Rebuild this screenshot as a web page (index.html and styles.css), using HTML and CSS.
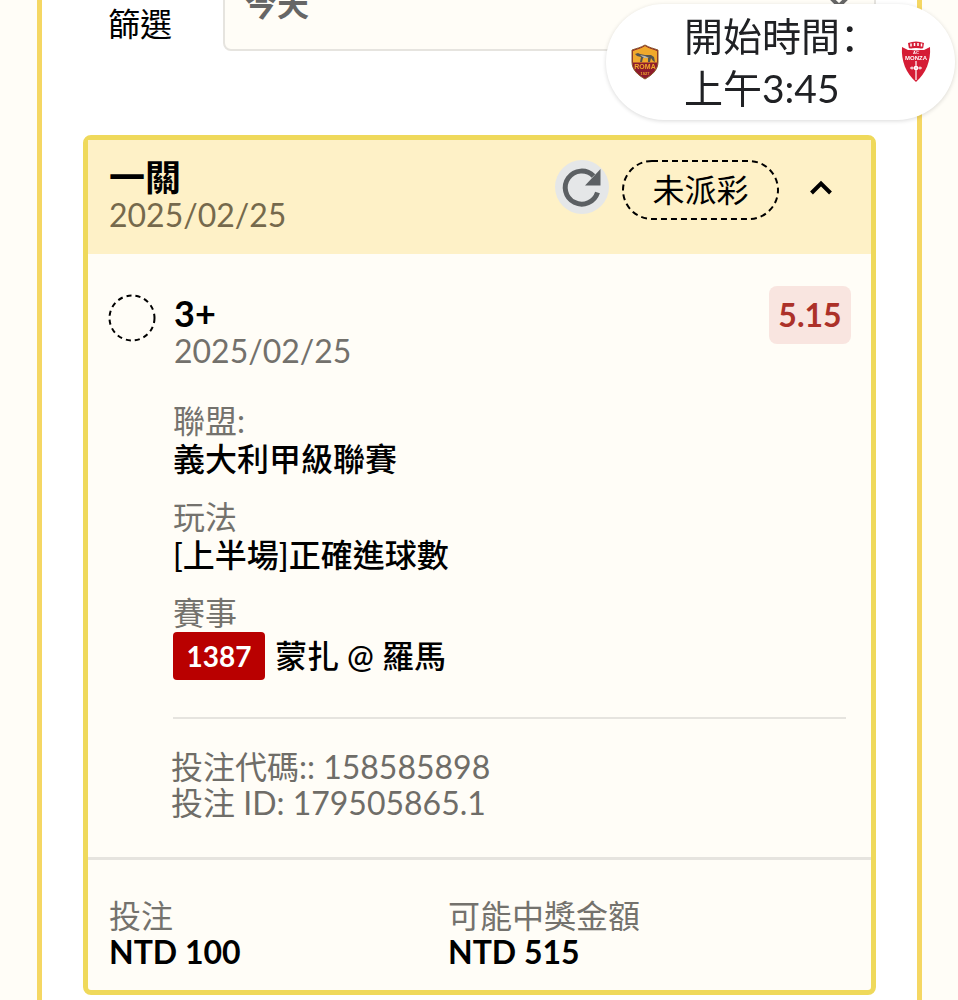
FILE: index.html
```html
<!DOCTYPE html>
<html lang="zh-Hant">
<head>
    <meta charset="UTF-8">
    <meta name="viewport" content="width=device-width, initial-scale=1.0">
    <title>投注紀錄</title>
    <link rel="stylesheet" href="styles.css">
</head>
<body>

    <main class="panel">
        <div class="filter">
            <label class="filter-label" for="day">篩選</label>
            <div class="select-box">
                <select id="day" class="filter-select">
                    <option>今天</option>
                </select>
                <svg class="select-arrow" viewBox="0 0 26 16" aria-hidden="true">
                    <path d="M3 3l10 10L23 3" fill="none" stroke="#666" stroke-width="4"/>
                </svg>
            </div>
        </div>

        <section class="card">
            <header class="card-header">
                <div class="card-title">
                    <h2 class="title">一關</h2>
                    <p class="header-date">2025/02/25</p>
                </div>
                <button class="refresh-btn" type="button" aria-label="重新整理">
                    <svg viewBox="0 0 54 54" aria-hidden="true">
                        <path d="M42.500 32.500A16.500 16.500 0 1 1 38.500 16" fill="none" stroke="#5c6063" stroke-width="5"/>
                        <path d="M45.500 9v16.500H30z" fill="#5c6063"/>
                    </svg>
                </button>
                <span class="status">
                    <svg class="status-line" aria-hidden="true">
                        <rect class="status-shape" x="1" y="1" rx="29"/>
                    </svg>
                    未派彩
                </span>
                <button class="toggle-btn" type="button" aria-label="收合">
                    <svg viewBox="0 0 24 16" aria-hidden="true">
                        <path d="M2.500 13L12 3.500 21.500 13" fill="none" stroke="#000" stroke-width="4"/>
                    </svg>
                </button>
            </header>

            <div class="card-body">
                <div class="bet">
                    <svg class="circle" viewBox="0 0 48 48" aria-hidden="true">
                        <circle cx="24" cy="24" r="22.500" fill="none" stroke="#000" stroke-width="2" stroke-dasharray="5.070 4"/>
                    </svg>
                    <div class="bet-name">
                        <h3 class="pick">3+</h3>
                        <p class="date">2025/02/25</p>
                    </div>
                    <span class="odds">5.15</span>
                </div>

                <dl class="info">
                    <div class="info-item">
                        <dt>聯盟:</dt>
                        <dd>義大利甲級聯賽</dd>
                    </div>
                    <div class="info-item">
                        <dt>玩法</dt>
                        <dd>[上半場]正確進球數</dd>
                    </div>
                    <div class="info-item">
                        <dt>賽事</dt>
                        <dd class="match"><span class="match-no">1387</span><span>蒙扎 @ 羅馬</span></dd>
                    </div>
                </dl>

                <div class="codes">
                    <p>投注代碼:: 158585898</p>
                    <p>投注 ID: 179505865.1</p>
                </div>
            </div>

            <dl class="card-footer">
                <div class="total">
                    <dt>投注</dt>
                    <dd>NTD 100</dd>
                </div>
                <div class="total">
                    <dt>可能中獎金額</dt>
                    <dd>NTD 515</dd>
                </div>
            </dl>
        </section>
    </main>

    <aside class="bubble">
        <svg class="team-logo" viewBox="0 0 28 36" role="img" aria-label="Roma">
            <path d="M14 1C10 3.500 5 4.500 1 6v12c0 8 6 13 13 17 7-4 13-9 13-17V6C23 4.500 18 3.500 14 1z" fill="#8e1b2c"/>
            <path d="M14 2C10 4.500 5 5.500 2 7v11.500h24V7C23 5.500 18 4.500 14 2z" fill="#f0a92c"/>
            <path d="M4 10l3-1 2 1 5 1h6l3 2 1 5-2-1-2-3-1 4h-2v-4h-5l-1 4h-2l1-5-4-1z" fill="#55534f"/>
            <path d="M9 11l5 1 4 2-5 0z" fill="#b9b6ae"/>
            <text x="14" y="25" class="logo-text roma-text">ROMA</text>
            <text x="14" y="31" class="logo-text roma-year">1927</text>
            <path d="M14 1C10 3.500 5 4.500 1 6v12c0 8 6 13 13 17 7-4 13-9 13-17V6C23 4.500 18 3.500 14 1z" fill="none" stroke="#8b5a2b" stroke-width="1"/>
        </svg>
        <p class="bubble-text" lang="zh-Hans">開始時間：<br>上午3:45</p>
        <svg class="team-logo monza" viewBox="0 0 30 42" role="img" aria-label="Monza">
            <path d="M1 6l6 3h16l6-3c1 14-4 26-14 35C5 32 0 20 1 6z" fill="#d51c35"/>
            <path d="M7 2q8-3 16 0l-1 6q-7-2-14 0z" fill="#d51c35"/>
            <path d="M10 2.500v3M13.500 2v3M17 2v3M20.500 2.500v3" stroke="#fff" stroke-width="1.500"/>
            <path d="M6 7q9 4 18 0" fill="none" stroke="#fff" stroke-width="1"/>
            <text x="15" y="13" class="logo-text monza-ac">AC</text>
            <text x="15" y="19" class="logo-text monza-text">MONZA</text>
            <path d="M15 20v19M9 27h12" fill="none" stroke="#fff" stroke-width="1.200"/>
            <path d="M11 25.500v3M19 25.500v3M13.500 25.500h3v3h-3z" fill="none" stroke="#fff" stroke-width="1"/>
        </svg>
    </aside>

</body>
</html>
```
FILE: styles.css
```css
* {
    box-sizing: border-box;
}
body {
    margin: 0;
    background-color: #fffdf7;
    font-family: Lato, "Noto Sans CJK TC", sans-serif;
    font-size: 32px;
    line-height: 38px;
    color: #000;
}
h2, h3, p, dl, dd {
    margin: 0;
}
button {
    padding: 0;
    border: none;
    background: none;
    cursor: pointer;
}
svg {
    display: block;
}

.panel {
    display: flow-root;
    min-height: 100vh;
    margin: 0 36px 0 37px;
    padding: 0 41px;
    border-left: 5px solid #f5d763;
    border-right: 5px solid #f5d763;
    background-color: #fff;
}

/* フィルター */
.filter {
    display: flex;
    align-items: flex-end;
    margin: -45px 0 84px;
    padding-left: 25px;
}
.filter-label {
    width: 115px;
    margin-bottom: 8px;
}
.select-box {
    position: relative;
    flex: 1;
}
.filter-select {
    display: block;
    width: 100%;
    height: 96px;
    padding: 0 20px;
    border: 2px solid #e6e4df;
    border-radius: 8px;
    background-color: #fffdf7;
    color: #666;
    font: bold 32px Lato, "Noto Sans CJK TC", sans-serif;
    appearance: none;
}
.select-arrow {
    position: absolute;
    right: 24px;
    top: 38px;
    width: 26px;
    height: 16px;
}

/* カード */
.card {
    border: 5px solid #efd95b;
    border-radius: 8px;
    background-color: #fffdf7;
}
.card-header {
    display: flex;
    align-items: flex-start;
    padding: 18px 38px 20px 21px;
    background-color: #fef1c7;
}
.card-title {
    flex: 1;
}
.title {
    font-size: 36px;
    font-weight: bold;
}
.header-date {
    color: #75694c;
}
.refresh-btn {
    width: 54px;
    height: 54px;
    margin: 2px 13px 0 0;
    border-radius: 50%;
    background-color: #e5e7e8;
}
.status {
    position: relative;
    width: 157px;
    margin-top: 2px;
    line-height: 60px;
    text-align: center;
}
.status-line {
    position: absolute;
    left: 0;
    top: 0;
    width: 100%;
    height: 100%;
}
.status-shape {
    width: calc(100% - 2px);
    height: calc(100% - 2px);
    fill: none;
    stroke: #000;
    stroke-width: 2px;
    stroke-dasharray: 6 4;
}
.toggle-btn {
    width: 24px;
    margin: 22px 0 0 30px;
}

.card-body {
    padding: 32px 20px 36px;
}
.bet {
    display: flex;
    align-items: flex-start;
}
.circle {
    width: 48px;
    height: 48px;
    margin: 8px 18px 0 0;
}
.bet-name {
    flex: 1;
    padding-top: 8px;
}
.pick {
    font-size: 36px;
    font-weight: bold;
}
.date {
    color: #73716c;
}
.odds {
    width: 82px;
    border-radius: 8px;
    background-color: #f9e5e0;
    color: #ac3129;
    font-weight: bold;
    line-height: 58px;
    text-align: center;
}

.info {
    display: flex;
    flex-direction: column;
    gap: 20px;
    margin: 32px 5px 0 65px;
    padding-bottom: 37px;
    border-bottom: 2px solid #e6e4df;
}
dt {
    color: #74726d;
}
dd {
    font-weight: 500;
}
.match {
    display: flex;
    align-items: center;
    gap: 10px;
}
.match-no {
    width: 92px;
    border-radius: 4px;
    background-color: #b90000;
    color: #fff;
    font-size: 28px;
    font-weight: bold;
    line-height: 48px;
    text-align: center;
}
.codes {
    margin: 30px 0 0 63px;
    color: #6f6d68;
    line-height: 36px;
}

.card-footer {
    display: flex;
    padding: 38px 21px 20px;
    border-top: 3px solid #e6e4df;
    line-height: 36px;
}
.total {
    flex: 0 0 339px;
}
.total dd {
    font-weight: bold;
}

/* 試合開始の吹き出し */
.bubble {
    position: fixed;
    top: 4px;
    right: 3px;
    display: flex;
    align-items: center;
    gap: 25px;
    padding: 6px 24px 6px 25px;
    border-radius: 58px;
    background-color: #fff;
    box-shadow: 0 1px 4px rgba(0, 0, 0, 0.15);
}
.bubble-text {
    width: 192px;
    color: #202124;
    font-family: Lato, "Noto Sans CJK SC", sans-serif;
    font-size: 39px;
    line-height: 52px;
    white-space: nowrap;
}
.team-logo {
    width: 28px;
    height: 36px;
}
.monza {
    width: 30px;
    height: 42px;
}
.logo-text {
    font-family: "Liberation Sans", sans-serif;
    font-weight: bold;
    text-anchor: middle;
}
.roma-text {
    fill: #f0a92c;
    font-size: 7px;
}
.roma-year {
    fill: #f0a92c;
    font-size: 4px;
}
.monza-ac {
    fill: #fff;
    font-size: 4px;
}
.monza-text {
    fill: #fff;
    font-size: 6px;
}
```
